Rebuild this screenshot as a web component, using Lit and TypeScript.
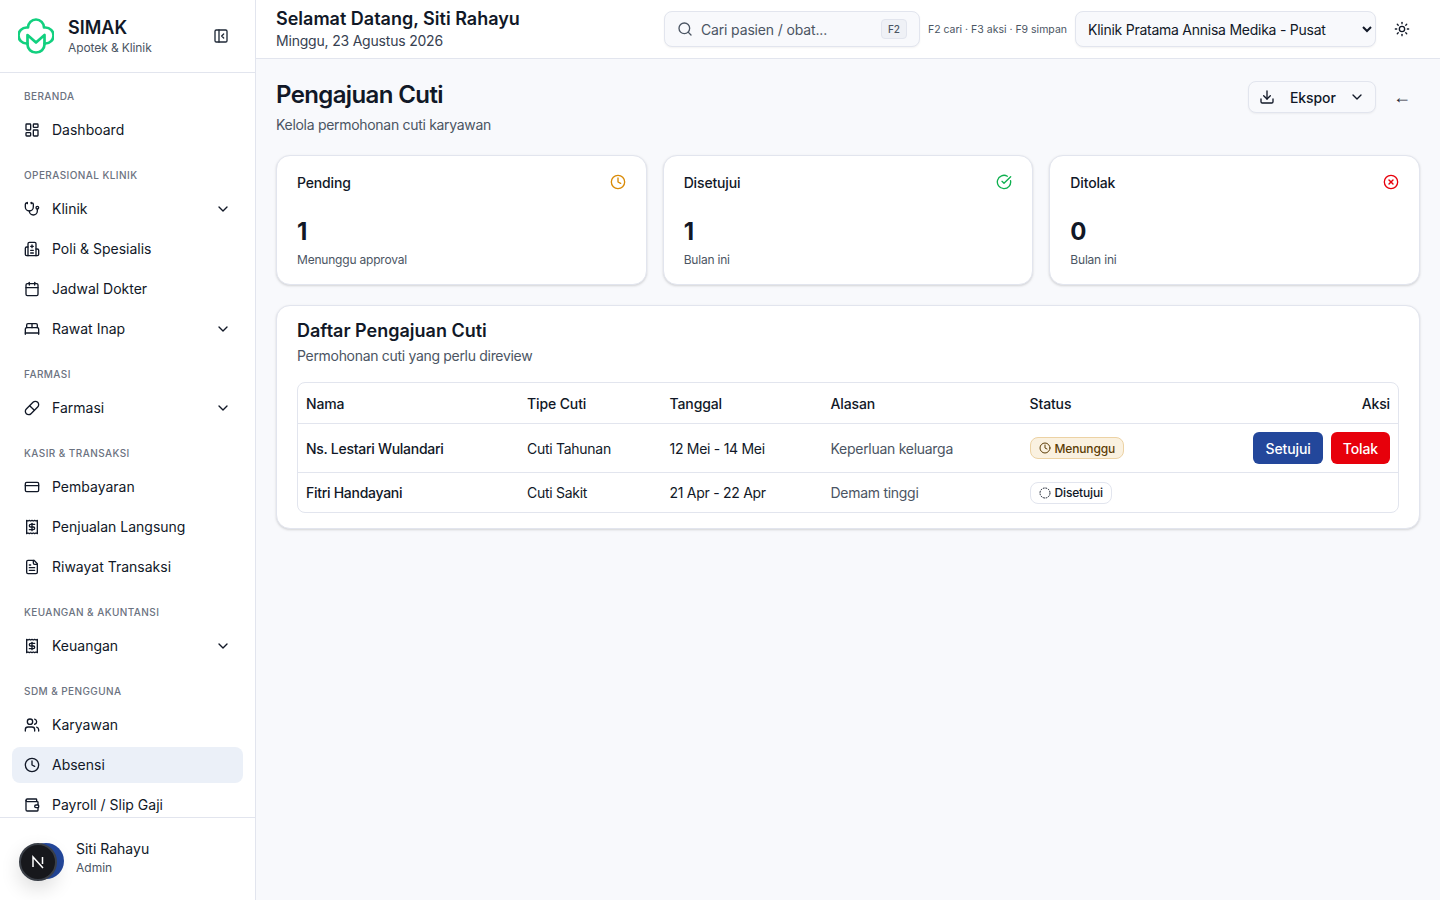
import { LitElement, html, css, svg } from "lit";
import { customElement } from "lit/decorators.js";

const ic = (body: unknown, size = 16, cls = "") => html`<svg class=${cls} width=${size} height=${size} viewBox="0 0 24 24" fill="none" stroke="currentColor" stroke-width="2" stroke-linecap="round" stroke-linejoin="round">${body}</svg>`;

const icons: Record<string, unknown> = {
  dash: svg`<rect width="7" height="9" x="3" y="3" rx="1"/><rect width="7" height="5" x="14" y="3" rx="1"/><rect width="7" height="9" x="14" y="12" rx="1"/><rect width="7" height="5" x="3" y="16" rx="1"/>`,
  steth: svg`<path d="M11 2v2"/><path d="M5 2v2"/><path d="M5 3H4a2 2 0 0 0-2 2v4a6 6 0 0 0 12 0V5a2 2 0 0 0-2-2h-1"/><path d="M8 15a6 6 0 0 0 12 0v-3"/><circle cx="20" cy="10" r="2"/>`,
  hospital: svg`<path d="M12 6v4"/><path d="M14 14h-4"/><path d="M14 18h-4"/><path d="M14 8h-4"/><path d="M18 12h2a2 2 0 0 1 2 2v6a2 2 0 0 1-2 2H4a2 2 0 0 1-2-2v-9a2 2 0 0 1 2-2h2"/><path d="M18 22V4a2 2 0 0 0-2-2H8a2 2 0 0 0-2 2v18"/>`,
  cal: svg`<path d="M8 2v4"/><path d="M16 2v4"/><rect width="18" height="18" x="3" y="4" rx="2"/><path d="M3 10h18"/>`,
  bed: svg`<path d="M2 20v-8a2 2 0 0 1 2-2h16a2 2 0 0 1 2 2v8"/><path d="M4 10V6a2 2 0 0 1 2-2h12a2 2 0 0 1 2 2v4"/><path d="M12 4v6"/><path d="M2 18h20"/>`,
  pill: svg`<path d="m10.5 20.5 10-10a4.95 4.95 0 1 0-7-7l-10 10a4.95 4.95 0 1 0 7 7Z"/><path d="m8.5 8.5 7 7"/>`,
  card: svg`<rect width="20" height="14" x="2" y="5" rx="2"/><line x1="2" x2="22" y1="10" y2="10"/>`,
  receipt: svg`<path d="M4 2v20l2-1 2 1 2-1 2 1 2-1 2 1 2-1 2 1V2l-2 1-2-1-2 1-2-1-2 1-2-1-2 1Z"/><path d="M16 8h-6a2 2 0 1 0 0 4h4a2 2 0 1 1 0 4H8"/><path d="M12 17.5v-11"/>`,
  file: svg`<path d="M15 2H6a2 2 0 0 0-2 2v16a2 2 0 0 0 2 2h12a2 2 0 0 0 2-2V7Z"/><path d="M14 2v4a2 2 0 0 0 2 2h4"/><path d="M10 9H8"/><path d="M16 13H8"/><path d="M16 17H8"/>`,
  users: svg`<path d="M16 21v-2a4 4 0 0 0-4-4H6a4 4 0 0 0-4 4v2"/><circle cx="9" cy="7" r="4"/><path d="M22 21v-2a4 4 0 0 0-3-3.87"/><path d="M16 3.13a4 4 0 0 1 0 7.75"/>`,
  clock: svg`<circle cx="12" cy="12" r="10"/><polyline points="12 6 12 12 16 14"/>`,
  wallet: svg`<path d="M19 7V4a1 1 0 0 0-1-1H5a2 2 0 0 0 0 4h15a1 1 0 0 1 1 1v4h-3a2 2 0 0 0 0 4h3a1 1 0 0 0 1-1v-2a1 1 0 0 0-1-1"/><path d="M3 5v14a2 2 0 0 0 2 2h15a1 1 0 0 0 1-1v-4"/>`,
  chev: svg`<path d="m6 9 6 6 6-6"/>`,
  panel: svg`<rect width="18" height="18" x="3" y="3" rx="2"/><path d="M9 3v18"/><path d="m16 15-3-3 3-3"/>`,
  search: svg`<circle cx="11" cy="11" r="8"/><path d="m21 21-4.3-4.3"/>`,
  sun: svg`<circle cx="12" cy="12" r="4"/><path d="M12 2v2"/><path d="M12 20v2"/><path d="m4.93 4.93 1.41 1.41"/><path d="m17.66 17.66 1.41 1.41"/><path d="M2 12h2"/><path d="M20 12h2"/><path d="m6.34 17.66-1.41 1.41"/><path d="m19.07 4.93-1.41 1.41"/>`,
  download: svg`<path d="M21 15v4a2 2 0 0 1-2 2H5a2 2 0 0 1-2-2v-4"/><polyline points="7 10 12 15 17 10"/><line x1="12" x2="12" y1="15" y2="3"/>`,
  check: svg`<path d="M21.801 10A10 10 0 1 1 17 3.335"/><path d="m9 11 3 3L22 4"/>`,
  x: svg`<circle cx="12" cy="12" r="10"/><path d="m15 9-6 6"/><path d="m9 9 6 6"/>`,
  dashed: svg`<circle cx="12" cy="12" r="10" stroke-dasharray="3.4 1.8" stroke-linecap="butt"/>`,
};

const nav = [
  { t: "BERANDA", items: [{ i: "dash", l: "Dashboard" }] },
  { t: "OPERASIONAL KLINIK", items: [{ i: "steth", l: "Klinik", c: 1 }, { i: "hospital", l: "Poli & Spesialis" }, { i: "cal", l: "Jadwal Dokter" }, { i: "bed", l: "Rawat Inap", c: 1 }] },
  { t: "FARMASI", items: [{ i: "pill", l: "Farmasi", c: 1 }] },
  { t: "KASIR & TRANSAKSI", items: [{ i: "card", l: "Pembayaran" }, { i: "receipt", l: "Penjualan Langsung" }, { i: "file", l: "Riwayat Transaksi" }] },
  { t: "KEUANGAN & AKUNTANSI", items: [{ i: "receipt", l: "Keuangan", c: 1 }] },
  { t: "SDM & PENGGUNA", items: [{ i: "users", l: "Karyawan" }, { i: "clock", l: "Absensi", a: 1 }, { i: "wallet", l: "Payroll / Slip Gaji" }] },
];

const stats = [
  { t: "Pending", v: "1", s: "Menunggu approval", i: "clock", c: "c-amber" },
  { t: "Disetujui", v: "1", s: "Bulan ini", i: "check", c: "c-green" },
  { t: "Ditolak", v: "0", s: "Bulan ini", i: "x", c: "c-red" },
];

@customElement("app-root")
export class AppRoot extends LitElement {
  static styles = css`
    :host { display: block; font-family: Inter, "Liberation Sans", sans-serif; color: #111827; height: 900px; overflow: hidden; background: #f8f9fc; }
    * { box-sizing: border-box; }
    svg { flex: none; display: block; }
    .layout { display: flex; height: 900px; }
    .side { width: 256px; flex: none; display: flex; flex-direction: column; background: #fff; border-right: 1px solid #e2e5ee; position: relative; }
    .brand { height: 73px; flex: none; display: flex; align-items: center; padding: 0 26px 0 18px; border-bottom: 1px solid #e2e5ee; }
    .brand-text { margin-left: 14px; flex: 1; }
    .brand-name { font-size: 18px; font-weight: 600; line-height: 22px; }
    .brand-sub { font-size: 12px; line-height: 16px; color: #4b5563; margin-top: 1px; letter-spacing: -0.1px; }
    .collapse { color: #1f2937; }
    .nav { flex: 1; overflow: hidden; padding: 11px 12px 0; }
    .group { margin-bottom: 15px; }
    .gt { font-size: 10px; font-weight: 500; letter-spacing: 0.42px; color: #6b7280; line-height: 16px; padding: 4px 12px 0; height: 24px; }
    .item { display: flex; align-items: center; height: 36px; padding: 0 12px; margin-top: 4px; border-radius: 8px; font-size: 14px; gap: 12px; color: #111827; }
    .item span { flex: 1; padding-bottom: 1px; }
    .item.on { background: #ebf0f8; }
    .user { height: 83px; flex: none; border-top: 1px solid #e2e5ee; display: flex; align-items: flex-start; padding: 21px 0 0 20px; background: #fff; }
    .avatar { width: 36px; height: 36px; border-radius: 50%; background: #23479b; margin: 4px 12px 0 8px; flex: none; }
    .uname { font-size: 14px; line-height: 20px; }
    .urole { font-size: 12px; line-height: 16px; color: #4b5563; margin-top: 1px; }
    .next { position: absolute; left: 19px; top: 843px; width: 38px; height: 38px; border-radius: 50%; background: #17181c; border: 2px solid #3a3f47; box-shadow: 0 8px 20px rgba(0,0,0,.14); color: #fff; display: flex; align-items: center; justify-content: center; }
    .main { flex: 1; min-width: 0; display: flex; flex-direction: column; }
    .top { height: 59px; flex: none; background: #fff; border-bottom: 1px solid #e2e5ee; display: flex; align-items: center; padding: 0 20px; }
    .hello { flex: 1; padding-top: 1px; }
    .hello b { display: block; font-size: 18px; font-weight: 600; line-height: 22px; }
    .hello small { display: block; font-size: 14px; line-height: 20px; color: #374151; margin-top: 1px; letter-spacing: -0.2px; }
    .search { width: 256px; height: 36px; border: 1px solid #e2e5ee; border-radius: 8px; background: #f8f9fc; box-shadow: 0 1px 2px rgba(0,0,0,.05); display: flex; align-items: center; padding: 0 12px; gap: 8px; font-size: 14px; color: #4b5563; letter-spacing: -0.15px; }
    .search span { flex: 1; }
    .kbd { font-size: 10px; font-weight: 500; width: 26px; height: 20px; background: #eff1f6; border: 1px solid #e2e5ee; border-radius: 4px; display: flex; align-items: center; justify-content: center; color: #4b5563; letter-spacing: 0; }
    .hints { font-size: 10.5px; color: #4b5563; margin: 0 8px; white-space: nowrap; }
    select { width: 301px; height: 36px; border: 1px solid #e2e5ee; border-radius: 8px; background: #f8f9fc; padding: 0 8px; font: 14px Inter, sans-serif; letter-spacing: -0.25px; color: #111827; box-shadow: 0 1px 2px rgba(0,0,0,.05); }
    .iconbox { width: 36px; height: 36px; margin-left: 8px; display: flex; align-items: center; justify-content: center; color: #111827; flex: none; }
    .content { padding: 20px; flex: 1; }
    .head { display: flex; align-items: flex-start; }
    .head-l { flex: 1; }
    h1 { margin: 0; font-size: 24px; line-height: 32px; font-weight: 600; letter-spacing: -0.62px; }
    .head p { margin: 4px 0 0; font-size: 14px; line-height: 20px; color: #4b5563; letter-spacing: -0.3px; }
    .ekspor { width: 128px; height: 32px; margin-top: 2px; border: 1px solid #e2e5ee; border-radius: 8px; background: #f8f9fc; box-shadow: 0 1px 2px rgba(0,0,0,.05); display: flex; align-items: center; padding: 0 10px; font-size: 14px; font-weight: 500; }
    .ekspor span { margin: 0 8px 0 15px; flex: 1; letter-spacing: -0.1px; }
    .back { margin-top: 0; font-family: "Liberation Sans", sans-serif; font-size: 18px; color: #1f2937; }
    .stats { display: grid; grid-template-columns: repeat(3, 1fr); gap: 16px; margin-top: 20px; }
    .card { background: #fff; border: 1px solid #e2e5ee; border-radius: 14px; box-shadow: 0 1px 3px rgba(0,0,0,.1), 0 1px 2px rgba(0,0,0,.06); }
    .stat { height: 130px; padding: 16px 20px; }
    .stat-h { display: flex; justify-content: space-between; align-items: center; font-size: 14px; font-weight: 500; height: 20px; letter-spacing: -0.15px; }
    .stat-v { font-size: 24px; font-weight: 700; line-height: 32px; margin-top: 24px; }
    .stat-s { font-size: 12px; line-height: 16px; color: #4b5563; margin-top: 4px; letter-spacing: -0.2px; }
    .c-amber { color: #d98a06; } .c-green { color: #0eb04f; } .c-red { color: #e7000b; }
    .list { margin-top: 20px; padding: 15px 20px; height: 224px; }
    h2 { margin: 0; font-size: 18px; line-height: 20px; font-weight: 600; }
    .list p { margin: 5px 0 0; font-size: 14px; line-height: 20px; color: #4b5563; letter-spacing: -0.31px; }
    .tw { margin-top: 16px; border: 1px solid #e2e5ee; border-radius: 8px; overflow: hidden; }
    .row { display: grid; grid-template-columns: 221px 142.5px 161px 199px 1fr; align-items: center; padding: 0 8px; font-size: 14px; border-top: 1px solid #e2e5ee; letter-spacing: -0.28px; }
    .row:first-child { border-top: 0; height: 40px; font-weight: 500; letter-spacing: -0.12px; }
    .row.r1 { height: 49px; } .row.r2 { height: 40px; }
    .muted { color: #4b5563; }
    .nm { font-weight: 500; }
    .badge { display: inline-flex; align-items: center; gap: 4px; height: 22px; padding: 0 8px; border: 1px solid #e2e5ee; border-radius: 8px; font-size: 12px; font-weight: 500; letter-spacing: -0.15px; }
    .badge.w { background: #faf1e0; border-color: #ecd2a4; color: #5c3d06; }
    .act { display: flex; justify-content: flex-end; gap: 8px; }
    .btn { height: 32px; padding: 0 12px; display: flex; align-items: center; border-radius: 6px; color: #fff; font-size: 14px; font-weight: 500; background: #23479b; letter-spacing: -0.1px; }
    .btn.r { background: #e7000b; }
    .stat-cell { display: flex; justify-content: space-between; align-items: center; }
  `;

  render() {
    return html`<div class="layout">
      <aside class="side">
        <div class="brand">
          <svg width="36" height="36" viewBox="0 0 36 36" fill="none" stroke="#12d07f" stroke-width="2.7" stroke-linejoin="round" stroke-linecap="round">
            <path d="M10 9.5a8 8 0 0 1 16 0h1.5a8 8 0 0 1 0 16H26.5v1a8.5 8 0 0 1-17 0v-1H8.5a8 8 0 0 1 0-16Z"/>
            <path d="M9.5 25.5V17l8.5 7.5 8.5-7.5v8.5"/>
          </svg>
          <div class="brand-text"><div class="brand-name">SIMAK</div><div class="brand-sub">Apotek &amp; Klinik</div></div>
          <span class="collapse">${ic(icons.panel)}</span>
        </div>
        <div class="nav">
          ${nav.map((g) => html`<div class="group"><div class="gt">${g.t}</div>
            ${g.items.map((it: any) => html`<div class="item ${it.a ? "on" : ""}">${ic(icons[it.i])}<span>${it.l}</span>${it.c ? ic(icons.chev) : ""}</div>`)}
          </div>`)}
        </div>
        <div class="user"><div class="avatar"></div><div><div class="uname">Siti Rahayu</div><div class="urole">Admin</div></div></div>
        <div class="next"><svg width="16" height="16" viewBox="0 0 16 16" fill="none" stroke="#fff" stroke-width="1.5"><path d="M3 13V3l10 11M12.5 3v7"/></svg></div>
      </aside>
      <main class="main">
        <header class="top">
          <div class="hello"><b>Selamat Datang, Siti Rahayu</b><small>Minggu, 23 Agustus 2026</small></div>
          <div class="search">${ic(icons.search)}<span>Cari pasien / obat...</span><div class="kbd">F2</div></div>
          <div class="hints">F2 cari · F3 aksi · F9 simpan</div>
          <select><option>Klinik Pratama Annisa Medika - Pusat</option></select>
          <span class="iconbox">${ic(icons.sun)}</span>
        </header>
        <section class="content">
          <div class="head">
            <div class="head-l"><h1>Pengajuan Cuti</h1><p>Kelola permohonan cuti karyawan</p></div>
            <div class="ekspor">${ic(icons.download)}<span>Ekspor</span>${ic(icons.chev)}</div>
            <div class="iconbox back">←</div>
          </div>
          <div class="stats">
            ${stats.map((s) => html`<div class="card stat"><div class="stat-h"><span>${s.t}</span><span class=${s.c}>${ic(icons[s.i])}</span></div><div class="stat-v">${s.v}</div><div class="stat-s">${s.s}</div></div>`)}
          </div>
          <div class="card list">
            <h2>Daftar Pengajuan Cuti</h2>
            <p>Permohonan cuti yang perlu direview</p>
            <div class="tw">
              <div class="row"><div>Nama</div><div>Tipe Cuti</div><div>Tanggal</div><div>Alasan</div><div class="stat-cell"><span>Status</span><span>Aksi</span></div></div>
              <div class="row r1"><div class="nm">Ns. Lestari Wulandari</div><div>Cuti Tahunan</div><div>12 Mei - 14 Mei</div><div class="muted">Keperluan keluarga</div><div class="stat-cell"><span class="badge w">${ic(icons.clock, 12)}Menunggu</span><div class="act"><div class="btn">Setujui</div><div class="btn r">Tolak</div></div></div></div>
              <div class="row r2"><div class="nm">Fitri Handayani</div><div>Cuti Sakit</div><div>21 Apr - 22 Apr</div><div class="muted">Demam tinggi</div><div class="stat-cell"><span class="badge">${ic(icons.dashed, 12)}Disetujui</span></div></div>
            </div>
          </div>
        </section>
      </main>
    </div>`;
  }
}
